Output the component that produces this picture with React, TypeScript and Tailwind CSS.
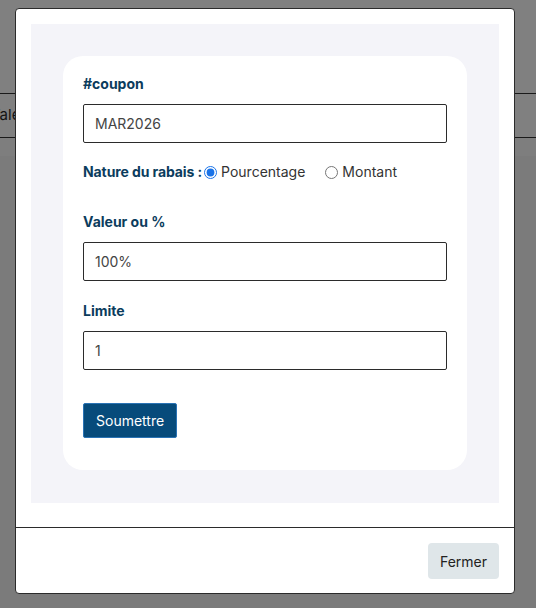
import { useState } from 'react';

const font = { fontFamily: 'Inter, "Noto Sans", sans-serif' };

function Field({ label, value, className }: { label: string; value: string; className?: string }) {
  return (
    <div className={className}>
      <label className="block text-[14px] leading-[20px] font-bold text-[#0b3c5d]">{label}</label>
      <input
        readOnly
        value={value}
        className="mt-[10px] block w-full h-[39px] px-[11px] border border-[#2b2b2b] rounded-[2px] text-[14px] text-[#444] bg-white outline-none"
      />
    </div>
  );
}

export default function App() {
  const [nature, setNature] = useState('pct');

  return (
    <div className="relative w-[536px] h-[608px] overflow-hidden bg-[#808080]" style={font}>
      {/* page behind the backdrop */}
      <div className="pt-[93px]">
        <div className="h-[45px] border-y border-[#1a1a1a] flex items-center overflow-hidden">
          <span className="ml-[-10px] text-[15px] text-[#141414] whitespace-nowrap">Valeur</span>
        </div>
        <div className="h-[18px] bg-[#7e7e7e]" />
        <div className="h-[500px] bg-[#7b7b7b]" />
      </div>

      {/* modal */}
      <div className="absolute left-[15px] top-[8px] w-[500px] h-[586px] bg-white border border-[#2b2b2b] rounded-[4px] flex flex-col">
        <div className="px-[15px] pt-[15px] pb-[24px]">
          <div className="bg-[#f4f4f9] px-8 pt-8 pb-[33px]">
            <div className="bg-white rounded-[20px] px-5 pt-[18px] pb-[32px]">
              <Field label="#coupon" value="MAR2026" />

              <div className="mt-[19px] flex items-center h-[20px] text-[14px] leading-[20px]">
                <span className="font-bold text-[#0b3c5d] tracking-[-0.1px]">Nature du rabais :</span>
                <label className="ml-[2px] flex items-center text-[#333]">
                  <input
                    type="radio"
                    name="nature"
                    checked={nature === 'pct'}
                    onChange={() => setNature('pct')}
                    className="w-[13px] h-[13px] accent-[#1a73e8]"
                  />
                  <span className="ml-[4px]">Pourcentage</span>
                </label>
                <label className="ml-[20px] flex items-center text-[#333]">
                  <input
                    type="radio"
                    name="nature"
                    checked={nature === 'amt'}
                    onChange={() => setNature('amt')}
                    className="w-[13px] h-[13px] accent-[#1a73e8]"
                  />
                  <span className="ml-[4px]">Montant</span>
                </label>
              </div>

              <Field label="Valeur ou %" value="100%" className="mt-[30px]" />
              <Field label="Limite" value="1" className="mt-[20px]" />

              <button className="mt-[33px] h-[35px] px-[12px] bg-[#074b7b] border border-[#2a73b5] rounded-[2px] text-white text-[14px]">
                Soumettre
              </button>
            </div>
          </div>
        </div>

        <div className="mt-auto border-t border-[#2b2b2b] p-[15px] flex justify-end">
          <button className="h-[36px] px-[12px] bg-[#dfe6e9] rounded-[4px] text-[14px] text-[#222]">Fermer</button>
        </div>
      </div>
    </div>
  );
}
